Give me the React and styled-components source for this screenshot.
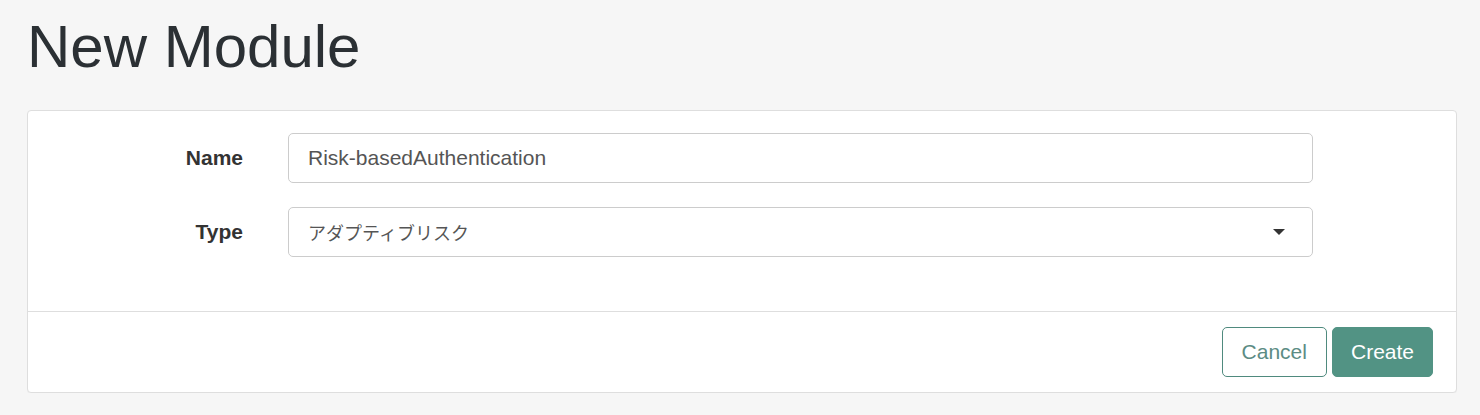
import React from "react";
import styled, { createGlobalStyle } from "styled-components";

const Global = createGlobalStyle`
  html, body { margin: 0; padding: 0; background: #f6f6f6; }
  body { font-family: "Liberation Sans", Arial, sans-serif; color: #333; }
`;

const Page = styled.div`
  padding: 0 23px 0 27px;
`;

const Title = styled.h1`
  margin: 11px 0 27px 0;
  font-size: 60px;
  line-height: 72px;
  font-weight: 400;
  color: #2b3034;
`;

const Card = styled.div`
  background: #fff;
  border: 1px solid #dedede;
  border-radius: 4px;
  box-shadow: 0 1px 1px rgba(0, 0, 0, 0.03);
`;

const Body = styled.div`
  padding: 22px 0 54px 0;
  display: flex;
  flex-direction: column;
  gap: 24px;
`;

const Row = styled.div`
  display: grid;
  grid-template-columns: 215px 1025px;
  column-gap: 45px;
  align-items: center;
`;

const Label = styled.label`
  text-align: right;
  font-size: 21px;
  font-weight: 700;
  color: #333;
`;

const Field = styled.div`
  position: relative;
  box-sizing: border-box;
  height: 50px;
  border: 1px solid #ccc;
  border-radius: 5px;
  display: flex;
  align-items: center;
  padding: 0 19px;
  font-size: ${(p) => (p.$jp ? "18px" : "21px")};
  font-family: "Liberation Sans", Arial, "Noto Sans CJK JP", sans-serif;
  color: #555;
`;

const Caret = styled.span`
  position: absolute;
  right: 27px;
  top: 50%;
  margin-top: -3px;
  width: 0;
  height: 0;
  border-left: 6px solid transparent;
  border-right: 6px solid transparent;
  border-top: 6px solid #333;
`;

const Footer = styled.div`
  border-top: 1px solid #dedede;
  padding: 15px 23px 15px 0;
  display: flex;
  justify-content: flex-end;
  gap: 5px;
`;

const Button = styled.button`
  box-sizing: border-box;
  height: 50px;
  padding: 0 ${(p) => (p.$primary ? "18px" : "19px")};
  font-family: "Liberation Sans", Arial, sans-serif;
  font-size: 21px;
  border-radius: 5px;
  border: 1px solid ${(p) => (p.$primary ? "#529384" : "#4f8a7e")};
  background: ${(p) => (p.$primary ? "#529384" : "#fff")};
  color: ${(p) => (p.$primary ? "#fff" : "#5c8c84")};
  cursor: pointer;
`;

export default function App() {
  return (
    <>
      <Global />
      <Page>
        <Title>New Module</Title>
        <Card>
          <Body>
            <Row>
              <Label>Name</Label>
              <Field>Risk-basedAuthentication</Field>
            </Row>
            <Row>
              <Label>Type</Label>
              <Field $jp>
                アダプティブリスク
                <Caret />
              </Field>
            </Row>
          </Body>
          <Footer>
            <Button>Cancel</Button>
            <Button $primary>Create</Button>
          </Footer>
        </Card>
      </Page>
    </>
  );
}
